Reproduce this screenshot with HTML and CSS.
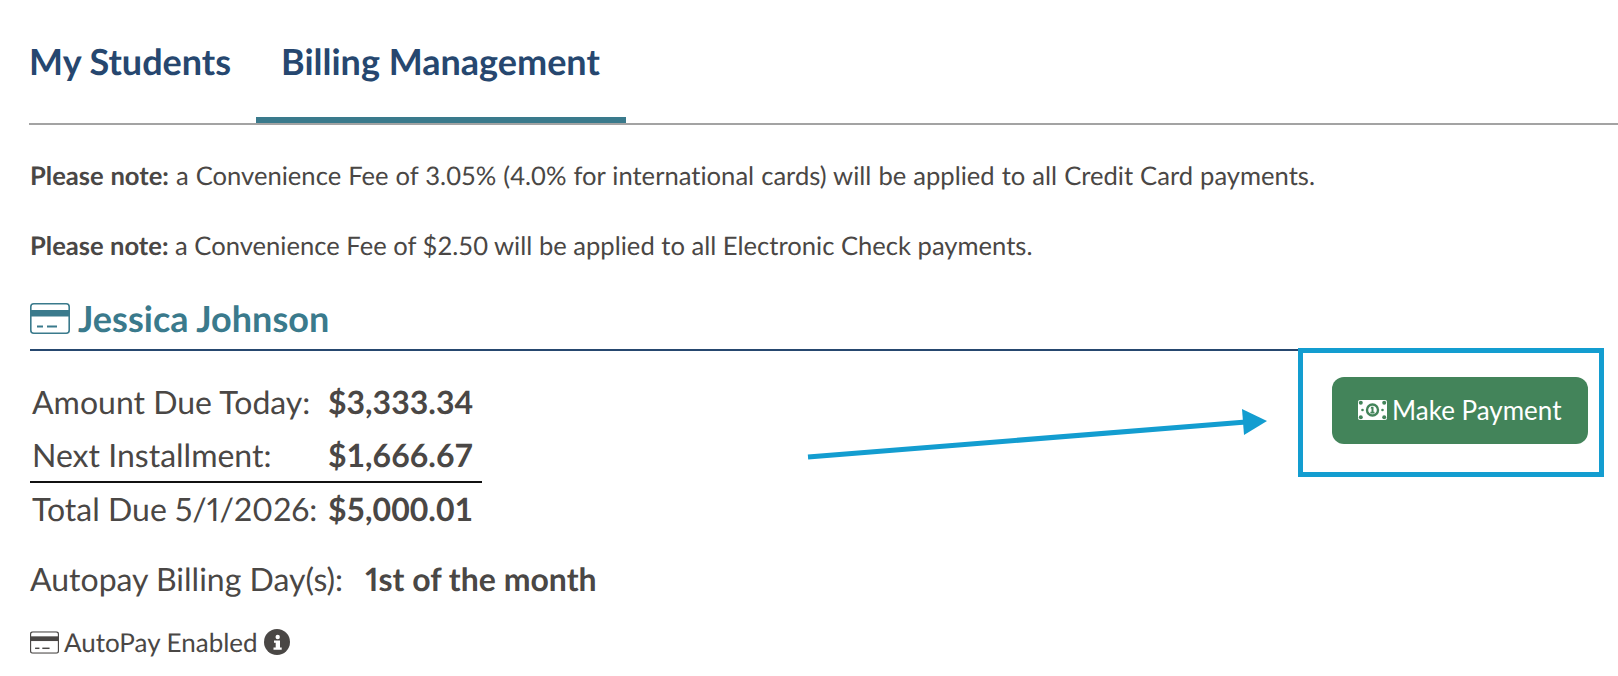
FILE: index.html
```html
<!DOCTYPE html>
<html lang="en">
<head>
    <meta charset="UTF-8">
    <title>Billing Management</title>
    <link rel="stylesheet" href="styles.css">
</head>
<body>
    <div class="tabs">
        <a class="tab tab-first">My Students</a>
        <a class="tab active">Billing Management</a>
    </div>

    <p class="note note-long"><b>Please note:</b> a Convenience Fee of 3.05% (4.0% for international cards) will be applied to all Credit Card payments.</p>
    <p class="note"><b>Please note:</b> a Convenience Fee of $2.50 will be applied to all Electronic Check payments.</p>

    <h2 class="student">
        <svg class="card-icon" viewBox="0 0 40 31"><use href="#card"></use></svg>
        Jessica Johnson
    </h2>

    <div class="account">
        <div class="summary">
            <div class="dues">
                <span>Amount Due Today:</span><b>$3,333.34</b>
                <span>Next Installment:</span><b>$1,666.67</b>
                <span class="total">Total Due 5/1/2026:</span><b class="total">$5,000.01</b>
            </div>
            <div class="autopay-day">Autopay Billing Day(s): <b>1st of the month</b></div>
            <div class="autopay">
                <svg class="card-small" viewBox="0 0 40 31"><use href="#card"></use></svg>
                AutoPay Enabled
                <svg class="info" viewBox="0 0 26 26">
                    <circle cx="13" cy="13" r="13" fill="#4a4745"/>
                    <circle cx="13.700" cy="8" r="2.200" fill="#fff"/>
                    <path fill="#fff" d="M10 11.500h6v7h1.700v2.200H9.500v-2.200h2.200v-4.800H10z"/>
                </svg>
            </div>
        </div>
        <button class="pay">
            <svg class="money" viewBox="0 0 29 20">
                <rect width="29" height="20" rx="2" fill="#fff"/>
                <circle cx="14.500" cy="10" r="5.500" fill="#fff" stroke="#43845a" stroke-width="2.400"/>
                <path fill="#43845a" d="M13.200 6.800h2.300v5h1v1.600h-4.100v-1.600h1.100V8.400h-.9z"/>
                <g fill="#43845a">
                    <circle cx="2.800" cy="2.800" r="2"/>
                    <circle cx="26.200" cy="2.800" r="2"/>
                    <circle cx="2.800" cy="17.200" r="2"/>
                    <circle cx="26.200" cy="17.200" r="2"/>
                    <circle cx="4.500" cy="10" r="1.300"/>
                    <circle cx="24.500" cy="10" r="1.300"/>
                </g>
            </svg>
            Make Payment
        </button>
    </div>

    <div class="highlight"></div>
    <svg class="arrow" viewBox="0 0 470 60">
        <path d="M2 53 L440 18" stroke="#139dd0" stroke-width="5" fill="none"/>
        <path d="M436 5 L461 17 L438 31 Z" fill="#139dd0"/>
    </svg>

    <svg class="defs" width="0" height="0">
        <symbol id="card" viewBox="0 0 40 31">
            <rect x="0.800" y="0.800" width="38.400" height="29.400" rx="3" fill="none" stroke="currentColor" stroke-width="1.600"/>
            <rect x="1" y="7" width="38" height="6.500" fill="currentColor"/>
            <rect x="7" y="22.500" width="6" height="2" fill="currentColor"/>
            <rect x="17" y="22.500" width="10" height="2" fill="currentColor"/>
        </symbol>
    </svg>
</body>
</html>
```

FILE: styles.css
```css
* {
    margin: 0;
    padding: 0;
    box-sizing: border-box;
}

body {
    font-family: 'Lato', sans-serif;
    font-variant-ligatures: none;
    text-rendering: geometricPrecision;
    color: #4a4745;
    background: #fff;
    padding: 0 14px 0 30px;
    height: 676px;
    overflow: hidden;
    position: relative;
}

.tabs {
    display: flex;
    height: 125px;
    margin-left: -1px;
    margin-right: -14px;
    border-bottom: 2px solid #a3a3a3;
}

.tab {
    padding: 39px 25px 0;
    font-size: 36px;
    font-weight: bold;
    color: #26476f;
}

.tab-first {
    margin-left: -1px;
    padding-left: 1px;
}

.tab.active {
    height: 123px;
    padding-right: 26px;
    border-bottom: 6px solid #3a7a8c;
}

.note {
    font-size: 25.600px;
    line-height: 28px;
    margin-top: 37px;
}

.note-long {
    word-spacing: 0.450px;
}

.note + .note {
    margin-top: 42px;
}

.student {
    display: flex;
    align-items: center;
    gap: 8px;
    margin-top: 39px;
    height: 52px;
    padding-bottom: 12px;
    font-size: 36px;
    font-weight: bold;
    color: #3a7a8c;
    border-bottom: 2px solid #26476f;
}

.card-icon {
    width: 40px;
    height: 31px;
}

.account {
    display: flex;
    justify-content: space-between;
    align-items: flex-start;
}

.dues {
    display: grid;
    grid-template-columns: 298px 154px;
    grid-auto-rows: 53px;
    width: 452px;
    margin-top: 24px;
    font-size: 32px;
    line-height: 53px;
}

.dues span {
    padding-left: 2px;
}

.dues .total {
    border-top: 2px solid #111;
    line-height: 52px;
}

.dues span.total {
    font-variant-numeric: proportional-nums;
}

.autopay-day {
    margin-top: 25px;
    font-size: 32px;
    line-height: 40px;
}

.autopay-day b {
    margin-left: 14px;
    font-variant-numeric: proportional-nums;
}

.autopay {
    display: flex;
    align-items: center;
    gap: 5px;
    margin-top: 28px;
    font-size: 26px;
    line-height: 30px;
}

.card-small {
    width: 29px;
    height: 23px;
}

.info {
    width: 26px;
    height: 26px;
    margin-left: 1px;
}

.pay {
    display: flex;
    align-items: center;
    gap: 5px;
    width: 256px;
    height: 67px;
    margin-top: 26px;
    margin-right: 16px;
    padding-left: 26px;
    padding-bottom: 1px;
    border: 0;
    border-radius: 12px;
    background: #43845a;
    color: #fff;
    font-family: inherit;
    font-size: 26px;
}

.money {
    width: 29px;
    height: 20px;
}

/* annotation laid over the screenshot */
.highlight {
    position: absolute;
    left: 1298px;
    top: 348px;
    width: 306px;
    height: 129px;
    border: 5px solid #139dd0;
}

.arrow {
    position: absolute;
    left: 806px;
    top: 404px;
    width: 470px;
    height: 60px;
}

.defs {
    position: absolute;
}
```
